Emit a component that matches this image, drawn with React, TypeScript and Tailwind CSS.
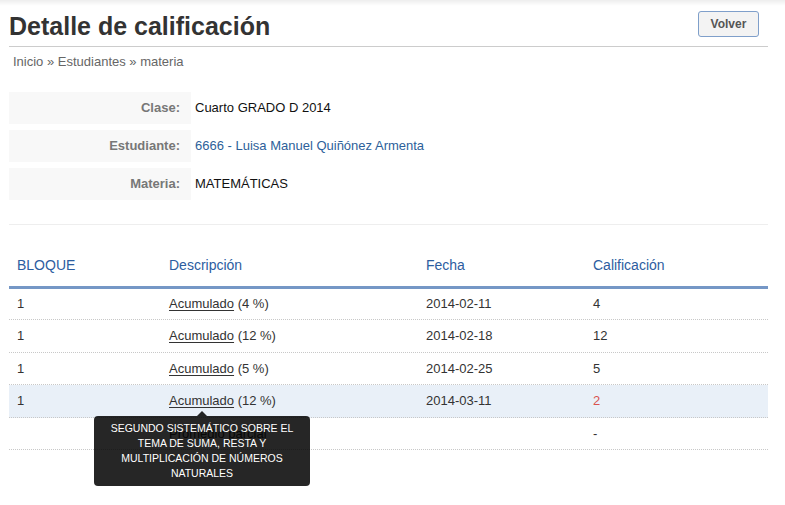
import React from "react";

const font = { fontFamily: '"Liberation Sans", Arial, sans-serif' };

type Row = {
  bloque: string;
  desc: string;
  pct?: string;
  fecha: string;
  cal: string;
  red?: boolean;
  hl?: boolean;
  h: string;
  tip?: boolean;
  link?: boolean;
};

const rows: Row[] = [
  { bloque: "1", desc: "Acumulado", pct: " (4 %)", fecha: "2014-02-11", cal: "4", h: "h-[31px]", link: true },
  { bloque: "1", desc: "Acumulado", pct: " (12 %)", fecha: "2014-02-18", cal: "12", h: "h-[33px]", link: true },
  { bloque: "1", desc: "Acumulado", pct: " (5 %)", fecha: "2014-02-25", cal: "5", h: "h-[32px]", link: true },
  { bloque: "1", desc: "Acumulado", pct: " (12 %)", fecha: "2014-03-11", cal: "2", red: true, hl: true, h: "h-[33px]", tip: true, link: true },
  { bloque: "", desc: "Promedio parcial", fecha: "", cal: "-", h: "h-[32px]" },
];

export default function App() {
  return (
    <div className="relative w-[785px] h-[505px] bg-white overflow-hidden text-[#333]" style={font}>
      <div className="absolute top-0 left-0 right-0 h-[6px] bg-gradient-to-b from-black/[0.07] to-transparent" />
      <div className="pl-[9px] w-[768px]">
        {/* Header */}
        <div className="h-[47px] flex justify-between items-start pt-[11px] border-b border-[#cccccc]">
          <h1 className="text-[25px] leading-[28px] font-bold text-[#333] mt-[1px]">Detalle de calificación</h1>
          <button className="h-[26px] w-[61px] mr-[9px] border border-[#7f9fca] rounded-[3px] bg-[#f3f3f3] text-[12px] font-bold text-[#555]">
            Volver
          </button>
        </div>

        {/* Breadcrumb */}
        <div className="mt-[6px] pl-[4px] text-[13px] leading-[18px] text-[#666]">
          Inicio » Estudiantes » materia
        </div>

        {/* Info */}
        <div className="mt-[21px] flex flex-col gap-[6px] text-[13px]">
          {[
            ["Clase:", "Cuarto GRADO D 2014", false],
            ["Estudiante:", "6666 - Luisa Manuel Quiñónez Armenta", true],
            ["Materia:", "MATEMÁTICAS", false],
          ].map(([l, v, link]) => (
            <div key={l as string} className="flex h-[32px] items-center">
              <div className="w-[182px] h-full bg-[#f8f8f8] flex items-center justify-end pr-[11px] font-bold text-[#777]">
                {l}
              </div>
              <div className={`pl-[4px] ${link ? "text-[#2d5f9a]" : "text-[#111]"}`}>{v}</div>
            </div>
          ))}
        </div>

        <div className="mt-[24px] border-t border-[#eeeeee]" />

        {/* Table */}
        <div className="mt-[30px]">
          <div className="grid grid-cols-[152px_257px_167px_183px] border-b-[3px] border-[#7597c6] h-[34px] text-[14px] leading-[20px] text-[#2d5d9f]">
            <div className="pl-[8px]">BLOQUE</div>
            <div className="pl-[8px]">Descripción</div>
            <div className="pl-[8px]">Fecha</div>
            <div className="pl-[8px]">Calificación</div>
          </div>
          {rows.map((r, i) => (
            <div
              key={i}
              className={`grid grid-cols-[152px_257px_167px_183px] items-center border-b border-dotted border-[#c8c8c8] text-[13px] ${r.h} ${r.hl ? "bg-[#e9f0f8]" : ""}`}
            >
              <div className="pl-[8px]">{r.bloque}</div>
              <div className="pl-[8px] relative">
                {r.link ? <span className="underline underline-offset-2">{r.desc}</span> : <span>{r.desc}</span>}
                {r.pct}
                {r.tip && (
                  <div className="absolute left-[-67px] top-[20px] w-[216px] z-10">
                    <div className="w-0 h-0 border-x-[5px] border-x-transparent border-b-[5px] border-b-black/85 ml-[103px]" />
                    <div className="bg-black/85 rounded-[4px] py-[5px] px-[10px] text-center text-white text-[10.5px] leading-[15px]">
                      SEGUNDO SISTEMÁTICO SOBRE EL TEMA DE SUMA, RESTA Y MULTIPLICACIÓN DE NÚMEROS NATURALES
                    </div>
                  </div>
                )}
              </div>
              <div className="pl-[8px]">{r.fecha}</div>
              <div className={`pl-[8px] ${r.red ? "text-[#d9534f]" : ""}`}>{r.cal}</div>
            </div>
          ))}
        </div>
      </div>
    </div>
  );
}
